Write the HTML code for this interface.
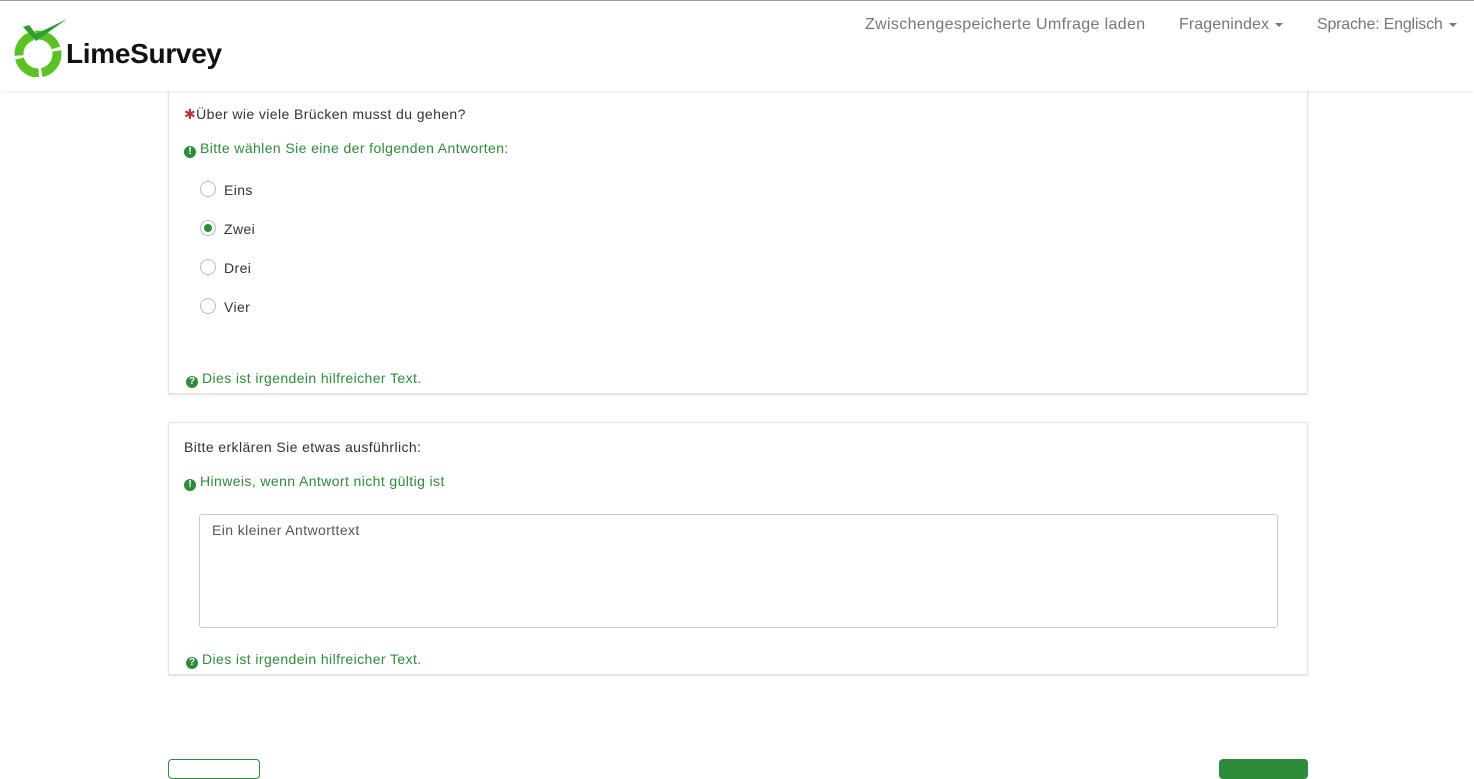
<!DOCTYPE html>
<html><head><meta charset="utf-8"><style>
*{box-sizing:border-box;margin:0;padding:0}
body{width:1474px;height:765px;overflow:hidden;background:#fff;font-family:"Liberation Sans",sans-serif;color:#333;font-size:14px;position:relative;letter-spacing:.4px}
.nav{position:absolute;left:0;top:0;width:1474px;height:91px;background:#fff;border-top:1px solid #999;box-shadow:0 1px 4px rgba(0,0,0,.08);z-index:2}
.nav a{position:absolute;top:15px;color:#777;font-size:16px;letter-spacing:.35px;white-space:nowrap}
.caret{display:inline-block;width:0;height:0;border-left:4px solid transparent;border-right:4px solid transparent;border-top:4px solid #777;vertical-align:middle;margin-left:6px}
.panel{position:absolute;left:168px;width:1140px;background:#fff;border:1px solid #e3e3e3;box-shadow:0 1px 2px rgba(0,0,0,.12)}
.t{position:absolute;white-space:nowrap}
.g{color:#2e8b3a}
.ic{display:inline-block;width:12px;height:12px;border-radius:50%;background:#2e8b3a;color:#fff;font-size:10px;font-weight:bold;text-align:center;line-height:12px;vertical-align:-1px;margin-right:4px;letter-spacing:0}
.r{position:absolute;left:31px;width:16px;height:16px;border:1px solid #bbb;border-radius:50%;background:#fff}
.r.on::after{content:"";position:absolute;left:3px;top:3px;width:8px;height:8px;border-radius:50%;background:#2e8b3a}
</style></head><body>
<div class="nav">
<svg style="position:absolute;left:14px;top:16px" width="56" height="60" viewBox="0 0 56 60">
<circle cx="24" cy="37" r="19" fill="none" stroke="#5cc224" stroke-width="9" stroke-dasharray="26 3"/>
<path d="M9 10 L15 8 L22 17 L53 2 L22 24 Z" fill="#2e9e32"/>
</svg>
<div class="t" style="left:66px;top:37px;font-size:28px;font-weight:bold;color:#111;letter-spacing:-.3px">LimeSurvey</div>
<a style="left:865px">Zwischengespeicherte Umfrage laden</a>
<a style="left:1179px;letter-spacing:.1px">Fragenindex<span class="caret"></span></a>
<a style="left:1317px;letter-spacing:-.2px">Sprache: Englisch<span class="caret"></span></a>
</div>
<div class="panel" style="top:60px;height:334px">
<div class="t" style="left:15px;top:45px"><span style="color:#b03a3a">✱</span>Über wie viele Brücken musst du gehen?</div>
<div class="t g" style="left:15px;top:79px"><span class="ic">!</span>Bitte wählen Sie eine der folgenden Antworten:</div>
<div class="r" style="top:120px"></div><div class="t" style="left:55px;top:121px">Eins</div>
<div class="r on" style="top:159px"></div><div class="t" style="left:55px;top:160px">Zwei</div>
<div class="r" style="top:198px"></div><div class="t" style="left:55px;top:199px">Drei</div>
<div class="r" style="top:237px"></div><div class="t" style="left:55px;top:238px">Vier</div>
<div class="t g" style="left:17px;top:309px"><span class="ic">?</span>Dies ist irgendein hilfreicher Text.</div>
</div>
<div class="panel" style="top:422px;height:253px">
<div class="t" style="left:15px;top:16px">Bitte erklären Sie etwas ausführlich:</div>
<div class="t g" style="left:15px;top:50px"><span class="ic">!</span>Hinweis, wenn Antwort nicht gültig ist</div>
<div style="position:absolute;left:30px;top:91px;width:1079px;height:114px;border:1px solid #ccc;border-radius:3px;padding:7px 12px;color:#555">Ein kleiner Antworttext</div>
<div class="t g" style="left:17px;top:228px"><span class="ic">?</span>Dies ist irgendein hilfreicher Text.</div>
</div>
<div style="position:absolute;left:168px;top:759px;width:92px;height:20px;border:1px solid #2e8b3a;border-radius:4px"></div>
<div style="position:absolute;left:1219px;top:759px;width:89px;height:20px;background:#2e8b3a;border-radius:4px"></div>
</body></html>
